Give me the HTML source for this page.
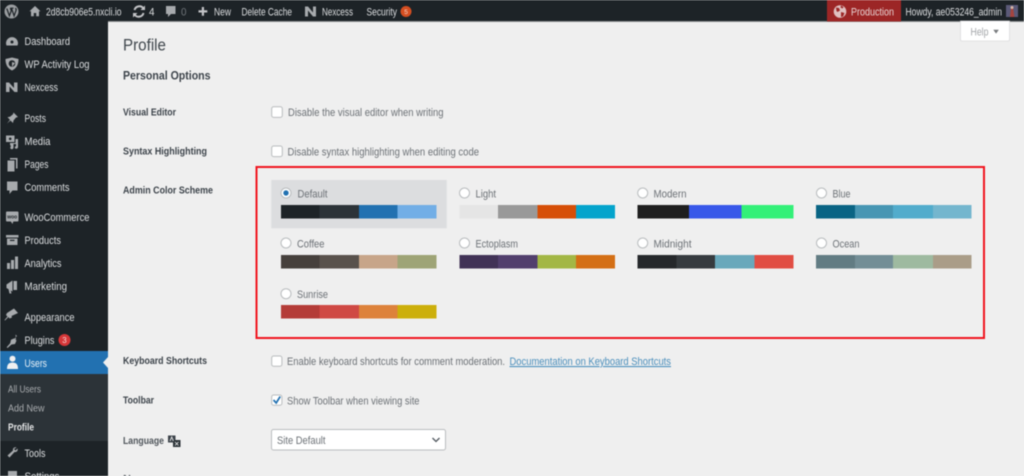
<!DOCTYPE html>
<html><head><meta charset="utf-8"><title>Profile</title>
<style>
html,body{margin:0;padding:0;width:1024px;height:476px;overflow:hidden;background:#efefef}
svg{display:block;filter:blur(.5px)}
text{font-family:"Liberation Sans",sans-serif;font-size:11px}
.b{fill:#dcdee0}.s{fill:#c6c9cb}
.l{fill:#3c434a;font-weight:bold;font-size:10.5px}
.t{fill:#6c7176}
.i{fill:#a7aaad}
</style></head><body>
<svg width="1024" height="476" viewBox="0 0 1024 476" xmlns="http://www.w3.org/2000/svg">
<rect width="1024" height="476" fill="#efefef"/>
<rect width="1024" height="21.500" fill="#1d2327"/>
<rect y="21" width="108" height="455" fill="#1d2327"/>
<rect x="108" y="21" width="916" height="1" fill="#8b8e90"/>

<!-- top bar -->
<circle cx="11.500" cy="11.500" r="7" fill="#9a9da0"/>
<path d="M6.800 8.600l2.600 7.200 1.900-5.200-1-2.400M10.200 8.200h3.400M11.600 8.600l2.500 7.200 1.900-5.200c.4-1-.1-2-.6-2.500" fill="none" stroke="#1d2327" stroke-width="1.200"/>
<path d="M35 6l5.500 5.300h-1.500v5h-2.800v-3.300h-2.400v3.300h-2.800v-5h-1.500z" class="i"/>
<text x="46" y="15.300" class="b" textLength="75.500" lengthAdjust="spacingAndGlyphs">2d8cb906e5.nxcli.io</text>
<path d="M134.500 10a5 5 0 0 1 9-1.500M143.500 13a5 5 0 0 1-9 1.500" fill="none" stroke="#c3c4c7" stroke-width="2"/>
<path d="M145 5.500v4.500h-4.500zM133 17.500v-4.500h4.500z" fill="#c3c4c7"/>
<text x="149" y="15.300" class="b" textLength="5.500" lengthAdjust="spacingAndGlyphs">4</text>
<path d="M166 6h9.500v8h-4.500l-3 3v-3h-2z" class="i"/>
<text x="181" y="15.300" fill="#70757a" textLength="5.500" lengthAdjust="spacingAndGlyphs">0</text>
<path d="M198.500 10.300h3.300v-3.300h2.200v3.300h3.300v2.200h-3.300v3.300h-2.200v-3.300h-3.300z" fill="#c3c4c7"/>
<text x="214" y="15.300" class="b" textLength="17" lengthAdjust="spacingAndGlyphs">New</text>
<text x="241.500" y="15.300" class="b" textLength="50.500" lengthAdjust="spacingAndGlyphs">Delete Cache</text>
<path d="M305 6.500h3l5 6v-6h3v10h-3l-5-6v6h-3z" class="i"/>
<text x="322" y="15.300" class="b" textLength="31" lengthAdjust="spacingAndGlyphs">Nexcess</text>
<text x="366.500" y="15.300" class="b" textLength="30.500" lengthAdjust="spacingAndGlyphs">Security</text>
<circle cx="406" cy="11.500" r="5.500" fill="#d54e21"/>
<text x="406" y="14" fill="#f4d8cc" style="font-size:6.500px" text-anchor="middle">5</text>
<rect x="827" width="74" height="21.500" fill="#9c2626"/>
<circle cx="840" cy="11.500" r="6.300" fill="#e0c0c0"/>
<path d="M836 7.500l3 .5 1 2.500-2.500 1.500-1-1zM841 12l3.500 1-1.500 3.500-2 .5zM841 5.500l2.500 1.500-1 1.500-2-1z" fill="#9c2626"/>
<text x="851" y="15.300" fill="#e8d4d4" textLength="43" lengthAdjust="spacingAndGlyphs">Production</text>
<text x="905.500" y="15.300" class="b" textLength="96.500" lengthAdjust="spacingAndGlyphs">Howdy, ae053246_admin</text>
<rect x="1006" y="5" width="12" height="12" fill="#5b5a78"/>
<path d="M1010 17l1-9h2l1.500 9z" fill="#a5443e"/><circle cx="1012" cy="7.500" r="1.500" fill="#d8b8a8"/>

<!-- sidebar icons -->
<path d="M6.500 45.500a6 6 0 1 1 11 0z" class="i"/><circle cx="12" cy="42" r="1.500" fill="#1d2327"/>
<path d="M12 57.500l6.500 1.500c0 5-1.500 9-6.500 11.500-5-2.500-6.500-6.500-6.500-11.500z" class="i"/><circle cx="12" cy="63.500" r="3.300" fill="#1d2327"/><path d="M12 62l3 1-3 4z" class="i"/>
<path d="M6 82.500h3l5 5.500v-5.500h3.500v9.500h-3l-5-5.500v5.500h-3.500z" class="i"/>
<path d="M13.500 112.500l4.500 4.500-2 .5-2.500 3-.5 2.500-2.500-2.500-3.500 3 3-3.800-2.500-2.500 2.500-.5 3-2.500z" class="i"/>
<path d="M6 135.500h8.500v6.500h-8.500zM10 144.500v-1.500h5.500v-4h2.500v8c0 1.500-1.500 2-2.500 1.500s-1-2 .5-2.300v-2.200h-2.500v3.500c0 1.500-1.500 2-2.500 1.500s-.8-2.500 0-2.500z" class="i"/><circle cx="10.200" cy="138.800" r="1.300" fill="#1d2327"/>
<path d="M10 158h7.500v10.500h-1.500v-9h-6zM7.500 160.500h7v11h-7z" class="i"/>
<path d="M7 181.500h10.500v9h-5l-3 3.500v-3.500h-2.500z" class="i"/>
<rect x="6" y="211.500" width="12.500" height="10" rx="1" class="i"/><path d="M10.500 221l2 3 1-3z" class="i"/><text x="12.200" y="218.300" fill="#1d2327" text-anchor="middle" style="font-size:5px;font-weight:bold">woo</text>
<path d="M6 235h12.500v2.500h-12.500zM7 238.500h10.500v6.500h-10.500z" class="i"/><rect x="10" y="239.800" width="4.500" height="1.200" fill="#1d2327"/>
<path d="M7 263h3v6h-3zM11 260h3v9h-3zM15 256.500h3v12.500h-3z" class="i"/>
<path d="M6.500 284.500l6-4v11l-6-3.500zM13.500 281h3.500v9h-3.500zM8.500 289l2 .5 1 4h-2z" class="i"/>
<path d="M7 313l7-4.500 4 4.500-6.500 3 .5 1.500-2.500 1-1-1.500-3.500 3.500-.5-.5 3-3.500-1.500-1.500z" class="i"/>
<path d="M15.500 334.500l1.500 1.500-2.500 2.500 2 2-1.500 3.500-3.500.5-4 3.500-.8-.8 3.500-4 .8-3.500 3.200-1.300 1.800 1.800z" class="i"/>

<!-- active item -->
<rect y="351" width="108" height="23" fill="#2271b1"/>
<rect y="374" width="108" height="67" fill="#2c3338"/>
<path d="M108 357l-5 5.500 5 5.500z" fill="#efefef"/>
<circle cx="12.500" cy="358.700" r="3" fill="#f0f0f1"/><path d="M7 369c0-5 2-6.500 5.500-6.500s5.500 1.500 5.500 6.500z" fill="#f0f0f1"/>
<path d="M16.500 447.500c-2-.8-4 .8-3.500 3l-5.500 5 2 2 5-5.500c2.200.5 3.800-1.500 3-3.500l-2 2-1.500-1.500z" class="i"/>
<path d="M8 471h9v5h-9z" class="i"/>

<!-- sidebar text -->
<text x="24.500" y="45" class="b" textLength="45.500" lengthAdjust="spacingAndGlyphs">Dashboard</text>
<text x="24.500" y="68" class="b" textLength="65" lengthAdjust="spacingAndGlyphs">WP Activity Log</text>
<text x="24.500" y="91" class="b" textLength="33.500" lengthAdjust="spacingAndGlyphs">Nexcess</text>
<text x="24.500" y="122" class="b" textLength="21.500" lengthAdjust="spacingAndGlyphs">Posts</text>
<text x="24.500" y="145" class="b" textLength="26" lengthAdjust="spacingAndGlyphs">Media</text>
<text x="24.500" y="168" class="b" textLength="24" lengthAdjust="spacingAndGlyphs">Pages</text>
<text x="24.500" y="191" class="b" textLength="45" lengthAdjust="spacingAndGlyphs">Comments</text>
<text x="24.500" y="221" class="b" textLength="65" lengthAdjust="spacingAndGlyphs">WooCommerce</text>
<text x="24.500" y="244" class="b" textLength="36.500" lengthAdjust="spacingAndGlyphs">Products</text>
<text x="24.500" y="267" class="b" textLength="37" lengthAdjust="spacingAndGlyphs">Analytics</text>
<text x="24.500" y="290" class="b" textLength="42.500" lengthAdjust="spacingAndGlyphs">Marketing</text>
<text x="24.500" y="321" class="b" textLength="50" lengthAdjust="spacingAndGlyphs">Appearance</text>
<text x="24.500" y="344" class="b" textLength="30" lengthAdjust="spacingAndGlyphs">Plugins</text>
<circle cx="64.500" cy="340" r="6" fill="#d63638"/><text x="64.500" y="343" fill="#f5d5d5" text-anchor="middle" style="font-size:8px">3</text>
<text x="24.500" y="367" fill="#e8f0f6" textLength="22.500" lengthAdjust="spacingAndGlyphs">Users</text>
<text x="8" y="392.500" fill="#a9acaf" textLength="33" lengthAdjust="spacingAndGlyphs" style="font-size:10px">All Users</text>
<text x="8" y="411.500" fill="#a9acaf" textLength="36.500" lengthAdjust="spacingAndGlyphs" style="font-size:10px">Add New</text>
<text x="8" y="430.500" fill="#e6e7e8" font-weight="bold" textLength="26" lengthAdjust="spacingAndGlyphs" style="font-size:10px">Profile</text>
<text x="24.500" y="457" class="b" textLength="21" lengthAdjust="spacingAndGlyphs">Tools</text>
<text x="24.500" y="480" class="b" textLength="35" lengthAdjust="spacingAndGlyphs">Settings</text>

<!-- help -->
<path d="M960.500 21h49v18.500a1.500 1.500 0 0 1-1.500 1.500h-46a1.500 1.500 0 0 1-1.500-1.500z" fill="#fff" stroke="#dcdcde" stroke-width=".8"/>
<text x="970.500" y="35.500" fill="#a3a6a9" textLength="18" lengthAdjust="spacingAndGlyphs">Help</text>
<path d="M993.300 29.800h5.500l-2.750 3.800z" fill="#777a7d"/>

<!-- headings -->
<text x="123" y="50.500" fill="#3f464c" textLength="43" lengthAdjust="spacingAndGlyphs" style="font-size:16.500px">Profile</text>
<text x="123" y="79.500" fill="#3c434a" font-weight="bold" textLength="87.500" lengthAdjust="spacingAndGlyphs" style="font-size:11.500px">Personal Options</text>

<!-- rows -->
<text x="123" y="115.500" class="l" textLength="53" lengthAdjust="spacingAndGlyphs">Visual Editor</text>
<rect x="271.700" y="106.800" width="10.600" height="10.600" rx="2" fill="#fff" stroke="#b9bcbe"/>
<text x="288" y="116" class="t" textLength="155.500" lengthAdjust="spacingAndGlyphs">Disable the visual editor when writing</text>
<text x="123" y="154.500" class="l" textLength="84" lengthAdjust="spacingAndGlyphs">Syntax Highlighting</text>
<rect x="271.700" y="146" width="10.600" height="10.600" rx="2" fill="#fff" stroke="#b9bcbe"/>
<text x="287.500" y="155.500" class="t" textLength="191.500" lengthAdjust="spacingAndGlyphs">Disable syntax highlighting when editing code</text>
<text x="123" y="193.500" class="l" textLength="90" lengthAdjust="spacingAndGlyphs">Admin Color Scheme</text>

<!-- selected scheme -->
<rect x="271.300" y="180" width="175.400" height="48.300" fill="#dcdddf"/>

<!-- swatches -->
<g shape-rendering="crispEdges">
<rect x="281" y="205" width="38.500" height="13.500" fill="#1d2327"/><rect x="319.500" y="205" width="39.500" height="13.500" fill="#2c3338"/><rect x="359" y="205" width="38.500" height="13.500" fill="#2271b1"/><rect x="397.500" y="205" width="39" height="13.500" fill="#72aee6"/>
<rect x="459.500" y="205" width="38.500" height="13.500" fill="#e5e5e5"/><rect x="498" y="205" width="39.500" height="13.500" fill="#999"/><rect x="537.500" y="205" width="38.500" height="13.500" fill="#d64e07"/><rect x="576" y="205" width="39" height="13.500" fill="#04a4cc"/>
<rect x="637.500" y="205" width="51.500" height="13.500" fill="#1e1e1e"/><rect x="689" y="205" width="52.500" height="13.500" fill="#3858e9"/><rect x="741.500" y="205" width="52" height="13.500" fill="#33f078"/>
<rect x="816" y="205" width="39" height="13.500" fill="#096484"/><rect x="855" y="205" width="38" height="13.500" fill="#4796b3"/><rect x="893" y="205" width="40" height="13.500" fill="#52accc"/><rect x="933" y="205" width="38.500" height="13.500" fill="#74b6ce"/>
<rect x="281" y="255" width="38.500" height="13.500" fill="#46403c"/><rect x="319.500" y="255" width="39.500" height="13.500" fill="#59524c"/><rect x="359" y="255" width="38.500" height="13.500" fill="#c7a589"/><rect x="397.500" y="255" width="39" height="13.500" fill="#9ea476"/>
<rect x="459.500" y="255" width="38.500" height="13.500" fill="#413256"/><rect x="498" y="255" width="39.500" height="13.500" fill="#523f6d"/><rect x="537.500" y="255" width="38.500" height="13.500" fill="#a3b745"/><rect x="576" y="255" width="39" height="13.500" fill="#d46f15"/>
<rect x="637.500" y="255" width="39" height="13.500" fill="#25282b"/><rect x="676.500" y="255" width="38.500" height="13.500" fill="#363b3f"/><rect x="715" y="255" width="39.500" height="13.500" fill="#69a8bb"/><rect x="754.500" y="255" width="39" height="13.500" fill="#e14d43"/>
<rect x="816" y="255" width="39" height="13.500" fill="#627c83"/><rect x="855" y="255" width="38" height="13.500" fill="#738e96"/><rect x="893" y="255" width="40" height="13.500" fill="#9ebaa0"/><rect x="933" y="255" width="38.500" height="13.500" fill="#aa9d88"/>
<rect x="281" y="305" width="38.500" height="13.500" fill="#b43c38"/><rect x="319.500" y="305" width="39.500" height="13.500" fill="#cf4944"/><rect x="359" y="305" width="38.500" height="13.500" fill="#dd823b"/><rect x="397.500" y="305" width="39" height="13.500" fill="#ccaf0b"/>
</g>

<!-- radios -->
<circle cx="286" cy="193" r="5" fill="#fff" stroke="#b9bcbe"/><circle cx="286" cy="193" r="2.700" fill="#2271b1"/>
<circle cx="464.500" cy="193" r="5" fill="#fff" stroke="#b9bcbe"/>
<circle cx="642.700" cy="193" r="5" fill="#fff" stroke="#b9bcbe"/>
<circle cx="821.500" cy="193" r="5" fill="#fff" stroke="#b9bcbe"/>
<circle cx="286" cy="243" r="5" fill="#fff" stroke="#b9bcbe"/>
<circle cx="464.500" cy="243" r="5" fill="#fff" stroke="#b9bcbe"/>
<circle cx="642.700" cy="243" r="5" fill="#fff" stroke="#b9bcbe"/>
<circle cx="821.500" cy="243" r="5" fill="#fff" stroke="#b9bcbe"/>
<circle cx="286" cy="293.700" r="5" fill="#fff" stroke="#b9bcbe"/>

<!-- scheme labels -->
<text x="297.500" y="197.300" class="t" textLength="30" lengthAdjust="spacingAndGlyphs">Default</text>
<text x="475.500" y="197.300" class="t" textLength="20.500" lengthAdjust="spacingAndGlyphs">Light</text>
<text x="653.500" y="197.300" class="t" textLength="33" lengthAdjust="spacingAndGlyphs">Modern</text>
<text x="832.500" y="197.300" class="t" textLength="18" lengthAdjust="spacingAndGlyphs">Blue</text>
<text x="297" y="247.300" class="t" textLength="27.500" lengthAdjust="spacingAndGlyphs">Coffee</text>
<text x="475.500" y="247.300" class="t" textLength="42.500" lengthAdjust="spacingAndGlyphs">Ectoplasm</text>
<text x="653.500" y="247.300" class="t" textLength="38" lengthAdjust="spacingAndGlyphs">Midnight</text>
<text x="832.500" y="247.300" class="t" textLength="27" lengthAdjust="spacingAndGlyphs">Ocean</text>
<text x="297" y="298" class="t" textLength="31" lengthAdjust="spacingAndGlyphs">Sunrise</text>

<!-- red box -->
<rect x="256.500" y="167" width="727.500" height="171" fill="none" stroke="#f0141e" stroke-width="2"/>

<!-- lower rows -->
<text x="123" y="364" class="l" textLength="84" lengthAdjust="spacingAndGlyphs">Keyboard Shortcuts</text>
<rect x="271.700" y="356" width="10.200" height="10.200" rx="2" fill="#fff" stroke="#b9bcbe"/>
<text x="287" y="365" class="t" textLength="218" lengthAdjust="spacingAndGlyphs">Enable keyboard shortcuts for comment moderation.</text>
<text x="509.500" y="365" fill="#4b8fbc" text-decoration="underline" textLength="161.500" lengthAdjust="spacingAndGlyphs">Documentation on Keyboard Shortcuts</text>
<text x="123" y="403.500" class="l" textLength="31" lengthAdjust="spacingAndGlyphs">Toolbar</text>
<rect x="271.700" y="395" width="10.200" height="10.200" rx="2" fill="#fff" stroke="#b9bcbe"/>
<path d="M273.500 400l2.700 3 4-6.500" fill="none" stroke="#2271b1" stroke-width="1.700"/>
<text x="287" y="404.500" class="t" textLength="132.500" lengthAdjust="spacingAndGlyphs">Show Toolbar when viewing site</text>
<text x="123" y="444" fill="#50565c" font-weight="bold" textLength="41" lengthAdjust="spacingAndGlyphs" style="font-size:10.500px">Language</text>
<path d="M168 435.500h7.500v7h-7.500z" fill="#3c434a"/><rect x="173" y="440" width="7.500" height="7" fill="#2c3338"/><path d="M170 441l1.700-4 1.700 4" fill="none" stroke="#efefef" stroke-width=".9"/><path d="M175 442l3.500 3.500M178.500 442l-3.500 3.500" stroke="#efefef" stroke-width=".8"/>
<rect x="271.500" y="429.500" width="174" height="20.500" rx="2" fill="#fff" stroke="#b9bcbe"/>
<text x="277" y="444" class="t" textLength="48.500" lengthAdjust="spacingAndGlyphs">Site Default</text>
<path d="M432.500 438l3.500 3.500 3.500-3.500" fill="none" stroke="#50575e" stroke-width="1.300"/>
<text x="123" y="482.500" fill="#3c434a" font-weight="bold" style="font-size:11px">Name</text>
</svg>
</body></html>
